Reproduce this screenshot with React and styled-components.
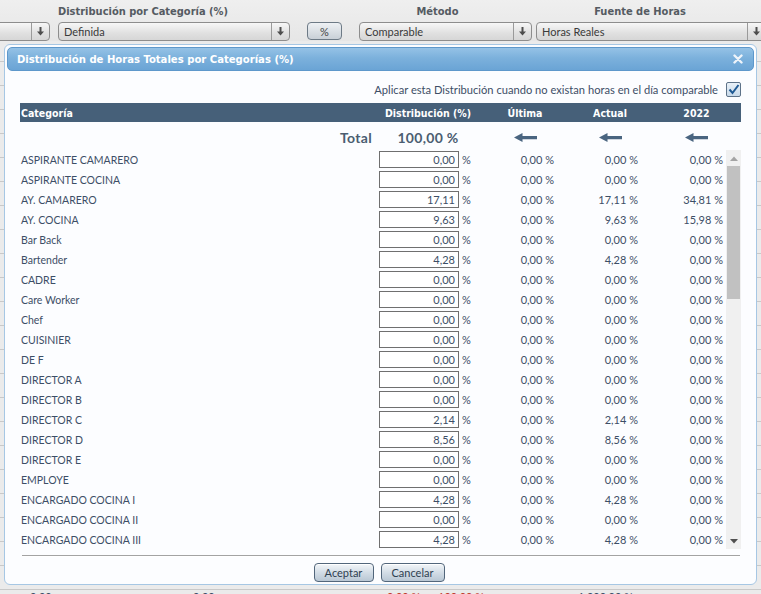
import React from 'react';
import styled, { createGlobalStyle } from 'styled-components';

const GlobalStyle = createGlobalStyle`
  html, body { margin: 0; padding: 0; }
  body {
    font-family: Lato, "Open Sans", sans-serif;
    background: #e8e8e8;
    width: 761px;
    height: 594px;
    overflow: hidden;
  }
`;

const Page = styled.div`
  position: relative;
  width: 761px;
  height: 594px;
  overflow: hidden;
  background: #ebebeb;
`;

const TopBar = styled.div`
  display: flex;
  align-items: flex-end;
  height: 41px;
  padding-top: 5px;
  box-sizing: border-box;
  background: linear-gradient(#efefef, #e6e6e6);
`;

const Field = styled.div`
  display: flex;
  flex-direction: column;
  gap: 3px;
  width: ${(p) => p.$w}px;
  margin-left: ${(p) => p.$ml || 0}px;
  flex-shrink: 0;
`;

const FieldLabel = styled.div`
  height: 14px;
  line-height: 14px;
  font-family: "DejaVu Sans Condensed", "DejaVu Sans", sans-serif;
  font-weight: bold;
  font-size: 11px;
  color: #555b62;
  text-align: ${(p) => p.$align || 'left'};
  padding-right: ${(p) => p.$pr || 0}px;
  white-space: nowrap;
`;

const Dropdown = styled.div`
  display: flex;
  height: 19px;
  box-sizing: border-box;
  border: 1px solid #8d8d8d;
  border-radius: 4px;
  background: linear-gradient(#f7f7f7, #e0e0e0 60%, #d6d6d6);
  overflow: hidden;
`;

const DropText = styled.div`
  flex: 1;
  font-size: 11px;
  color: #3a3a3a;
  line-height: 17px;
  padding-left: 5px;
  white-space: nowrap;
  overflow: hidden;
`;

const DropBtn = styled.div`
  width: 17px;
  flex-shrink: 0;
  border-left: 1px solid #9a9a9a;
  display: flex;
  align-items: center;
  justify-content: center;
`;

const PctButton = styled.div`
  width: 35px;
  height: 18px;
  box-sizing: border-box;
  margin-left: ${(p) => p.$ml}px;
  margin-bottom: 1px;
  border: 1px solid #6d7a86;
  border-radius: 4px;
  background: linear-gradient(#eef1f4, #c9d0d7);
  font-size: 11px;
  color: #444;
  display: flex;
  align-items: center;
  justify-content: center;
  flex-shrink: 0;
`;

const BgRows = styled.div`
  display: flex;
  flex-direction: column;
`;

const BgRow = styled.div`
  height: ${(p) => p.$h}px;
  border-bottom: 1px solid #c9c9c9;
  box-sizing: border-box;
`;

const BgTextRow = styled.div`
  display: flex;
  font-size: 11px;
  color: #3c4e66;
`;

const BgCell = styled.span`
  width: ${(p) => p.$w}px;
  color: ${(p) => p.$c || '#3c4e66'};
  flex-shrink: 0;
`;

const Modal = styled.div`
  position: absolute;
  left: 4px;
  top: 44px;
  width: 753px;
  height: 541px;
  box-sizing: border-box;
  border: 1px solid #a6c7e4;
  border-radius: 6px;
  background: #fcfdff;
  padding: 2px;
  display: flex;
  flex-direction: column;
`;

const TitleBar = styled.div`
  height: 25px;
  box-sizing: border-box;
  border: 1px solid #5e98cb;
  border-radius: 5px;
  background: linear-gradient(#95c2e6, #7cb1dc 45%, #6aa4d5);
  display: flex;
  align-items: center;
  justify-content: space-between;
  padding: 0 10px 0 9px;
`;

const Title = styled.div`
  color: #ffffff;
  font-family: "DejaVu Sans Condensed", "DejaVu Sans", sans-serif;
  font-weight: bold;
  font-size: 11.2px;
`;

const Body = styled.div`
  display: flex;
  flex-direction: column;
  padding: 0 13px;
`;

const CheckRow = styled.div`
  margin-top: 10px;
  height: 16px;
  display: flex;
  justify-content: flex-end;
  align-items: center;
  gap: 8px;
  font-size: 11.15px;
  color: #3c4e66;
`;

const CheckBox = styled.div`
  width: 15px;
  height: 15px;
  box-sizing: border-box;
  border: 1px solid #5d7288;
  border-radius: 2px;
  background: linear-gradient(#e9f1f8, #c8d9e9);
  display: flex;
  align-items: center;
  justify-content: center;
`;

const HeaderRow = styled.div`
  margin-top: 6px;
  height: 19px;
  background: #466079;
  display: grid;
  grid-template-columns: 362px 92px 102px 68px 1fr;
  align-items: center;
  color: #fff;
  font-family: "DejaVu Sans Condensed", "DejaVu Sans", sans-serif;
  font-weight: bold;
  font-size: 10.5px;
`;

const HeadCell = styled.div`
  text-align: ${(p) => p.$align || 'center'};
  padding-left: ${(p) => p.$pl || 0}px;
  white-space: nowrap;
`;

const TotalRow = styled.div`
  margin-top: 5px;
  height: 20px;
  display: grid;
  grid-template-columns: 352px 10px 92px 102px 68px 1fr;
  align-items: center;
  color: #4b5d71;
  font-weight: bold;
  font-size: 14px;
  letter-spacing: 0.3px;
`;

const TotalCell = styled.div`
  padding-left: ${(p) => p.$pl || 0}px;
  display: flex;
  justify-content: ${(p) => (p.$align === 'right' ? 'flex-end' : 'center')};
  white-space: nowrap;
`;

const ListArea = styled.div`
  margin-top: 2px;
  height: 400px;
  display: flex;
`;

const List = styled.div`
  width: 708px;
  display: flex;
  flex-direction: column;
  overflow: hidden;
`;

const Row = styled.div`
  height: 20px;
  flex-shrink: 0;
  display: grid;
  grid-template-columns: 359px 80px 15px 83px 84px 85px;
  align-items: center;
  font-size: 11px;
  color: #3c4e66;
`;

const Label = styled.div`
  padding: 1px 0 0 1px;
  font-size: 10.5px;
  white-space: nowrap;
`;

const ValueInput = styled.input`
  width: 80px;
  height: 17px;
  box-sizing: border-box;
  border: 1px solid #6f6f6f;
  background: #fff;
  font-family: inherit;
  font-size: 11px;
  color: #3c4e66;
  text-align: right;
  padding: 0 3px 0 0;
  margin: 0;
  outline: none;
`;

const Pct = styled.div`
  padding-left: 3px;
`;

const Num = styled.div`
  text-align: right;
  padding-right: 3px;
  white-space: nowrap;
`;

const ScrollTrack = styled.div`
  width: 15px;
  height: 399px;
  margin-top: 1px;
  background: #f0f0f0;
  display: flex;
  flex-direction: column;
  align-items: center;
`;

const ScrollBtn = styled.div`
  height: 16px;
  width: 15px;
  display: flex;
  align-items: center;
  justify-content: center;
  flex-shrink: 0;
`;

const ScrollSpace = styled.div`
  flex: 1;
  width: 100%;
  display: flex;
  justify-content: center;
`;

const Thumb = styled.div`
  width: 13px;
  height: 133px;
  background: #c1c1c1;
`;

const Separator = styled.div`
  margin: 6px 1px 0 2px;
  height: 1px;
  background: #a3a3a3;
  box-shadow: 0 1px 0 #ffffff;
`;

const Footer = styled.div`
  margin-top: 7px;
  display: flex;
  justify-content: center;
  gap: 7px;
  padding-right: 3px;
`;

const Button = styled.button`
  width: ${(p) => p.$w}px;
  height: 19px;
  box-sizing: border-box;
  border: 1px solid #52667b;
  border-radius: 4px;
  background: linear-gradient(#f3f6f9, #d3dde6 50%, #b9c7d4);
  box-shadow: inset 0 1px 0 #ffffff;
  font-family: inherit;
  font-size: 11px;
  color: #2f3f51;
  padding: 0;
  cursor: pointer;
`;

const DownArrow = ({ color = '#4d4d4d' }) => (
  <svg width="9" height="9" viewBox="0 0 9 9">
    <path d="M3.5 0 H5.5 V4.5 H8 L4.5 8.5 L1 4.5 H3.5 Z" fill={color} />
  </svg>
);

const LeftArrow = () => (
  <svg width="23" height="9" viewBox="0 0 23 9">
    <path d="M0 4.5 L8.5 0 V3 H23 V6.2 H8.5 V9 Z" fill="#4a6580" />
  </svg>
);

const Tri = ({ up, color }) => (
  <svg width="8" height="5" viewBox="0 0 8 5">
    <path d={up ? 'M0 5 L4 0.5 L8 5 Z' : 'M0 0 L8 0 L4 4.5 Z'} fill={color} />
  </svg>
);

const rows = [
  ['ASPIRANTE CAMARERO', '0,00', '0,00', '0,00', '0,00'],
  ['ASPIRANTE COCINA', '0,00', '0,00', '0,00', '0,00'],
  ['AY. CAMARERO', '17,11', '0,00', '17,11', '34,81'],
  ['AY. COCINA', '9,63', '0,00', '9,63', '15,98'],
  ['Bar Back', '0,00', '0,00', '0,00', '0,00'],
  ['Bartender', '4,28', '0,00', '4,28', '0,00'],
  ['CADRE', '0,00', '0,00', '0,00', '0,00'],
  ['Care Worker', '0,00', '0,00', '0,00', '0,00'],
  ['Chef', '0,00', '0,00', '0,00', '0,00'],
  ['CUISINIER', '0,00', '0,00', '0,00', '0,00'],
  ['DE F', '0,00', '0,00', '0,00', '0,00'],
  ['DIRECTOR A', '0,00', '0,00', '0,00', '0,00'],
  ['DIRECTOR B', '0,00', '0,00', '0,00', '0,00'],
  ['DIRECTOR C', '2,14', '0,00', '2,14', '0,00'],
  ['DIRECTOR D', '8,56', '0,00', '8,56', '0,00'],
  ['DIRECTOR E', '0,00', '0,00', '0,00', '0,00'],
  ['EMPLOYE', '0,00', '0,00', '0,00', '0,00'],
  ['ENCARGADO COCINA I', '4,28', '0,00', '4,28', '0,00'],
  ['ENCARGADO COCINA II', '0,00', '0,00', '0,00', '0,00'],
  ['ENCARGADO COCINA III', '4,28', '0,00', '4,28', '0,00'],
];

export default function App() {
  return (
    <Page>
      <GlobalStyle />
      <TopBar>
        <Field $w={150} $ml={-100}>
          <FieldLabel />
          <Dropdown>
            <DropText />
            <DropBtn><DownArrow /></DropBtn>
          </Dropdown>
        </Field>
        <Field $w={232} $ml={8}>
          <FieldLabel>Distribución por Categoría (%)</FieldLabel>
          <Dropdown>
            <DropText>Definida</DropText>
            <DropBtn><DownArrow /></DropBtn>
          </Dropdown>
        </Field>
        <PctButton $ml={17}>%</PctButton>
        <Field $w={173} $ml={17}>
          <FieldLabel $align="center" $pr={16}>Método</FieldLabel>
          <Dropdown>
            <DropText>Comparable</DropText>
            <DropBtn><DownArrow /></DropBtn>
          </Dropdown>
        </Field>
        <Field $w={230} $ml={4}>
          <FieldLabel $align="center" $pr={22}>Fuente de Horas</FieldLabel>
          <Dropdown>
            <DropText>Horas Reales</DropText>
            <DropBtn><DownArrow /></DropBtn>
          </Dropdown>
        </Field>
      </TopBar>
      <BgRows>
        <BgRow $h={21} />
        {Array.from({ length: 22 }).map((_, i) => (
          <BgRow key={i} $h={24} />
        ))}
        <BgTextRow>
          <BgCell $w={30} />
          <BgCell $w={163}>0,00</BgCell>
          <BgCell $w={190}>0,00</BgCell>
          <BgCell $w={55} $c="#c0392b">-0,00 %</BgCell>
          <BgCell $w={140} $c="#c0392b">100,00 %</BgCell>
          <BgCell $w={100}>1.000,00 %</BgCell>
        </BgTextRow>
      </BgRows>

      <Modal>
        <TitleBar>
          <Title>Distribución de Horas Totales por Categorías (%)</Title>
          <svg width="10" height="10" viewBox="0 0 10 10">
            <path d="M1.5 1.5 L8.5 8.5 M8.5 1.5 L1.5 8.5" stroke="#eef4fa" strokeWidth="2.4" strokeLinecap="round" />
          </svg>
        </TitleBar>
        <Body>
          <CheckRow>
            <span>Aplicar esta Distribución cuando no existan horas en el día comparable</span>
            <CheckBox>
              <svg width="12" height="11" viewBox="0 0 12 11">
                <path d="M1.5 5.5 L4.5 9 L10.5 1" stroke="#1f5a94" strokeWidth="2" fill="none" />
              </svg>
            </CheckBox>
          </CheckRow>
          <HeaderRow>
            <HeadCell $align="left" $pl={1}>Categoría</HeadCell>
            <HeadCell>Distribución (%)</HeadCell>
            <HeadCell>Última</HeadCell>
            <HeadCell>Actual</HeadCell>
            <HeadCell $pl={8}>2022</HeadCell>
          </HeaderRow>
          <TotalRow>
            <TotalCell $align="right">Total</TotalCell>
            <TotalCell />
            <TotalCell>100,00 %</TotalCell>
            <TotalCell><LeftArrow /></TotalCell>
            <TotalCell><LeftArrow /></TotalCell>
            <TotalCell $pl={8}><LeftArrow /></TotalCell>
          </TotalRow>
          <ListArea>
            <List>
              {rows.map(([name, dist, ult, act, y]) => (
                <Row key={name}>
                  <Label>{name}</Label>
                  <ValueInput readOnly value={dist} />
                  <Pct>%</Pct>
                  <Num>{ult} %</Num>
                  <Num>{act} %</Num>
                  <Num>{y} %</Num>
                </Row>
              ))}
            </List>
            <ScrollTrack>
              <ScrollBtn><Tri up color="#a3a3a3" /></ScrollBtn>
              <ScrollSpace><Thumb /></ScrollSpace>
              <ScrollBtn><Tri color="#505050" /></ScrollBtn>
            </ScrollTrack>
          </ListArea>
          <Separator />
          <Footer>
            <Button $w={60}>Aceptar</Button>
            <Button $w={64}>Cancelar</Button>
          </Footer>
        </Body>
      </Modal>
    </Page>
  );
}
